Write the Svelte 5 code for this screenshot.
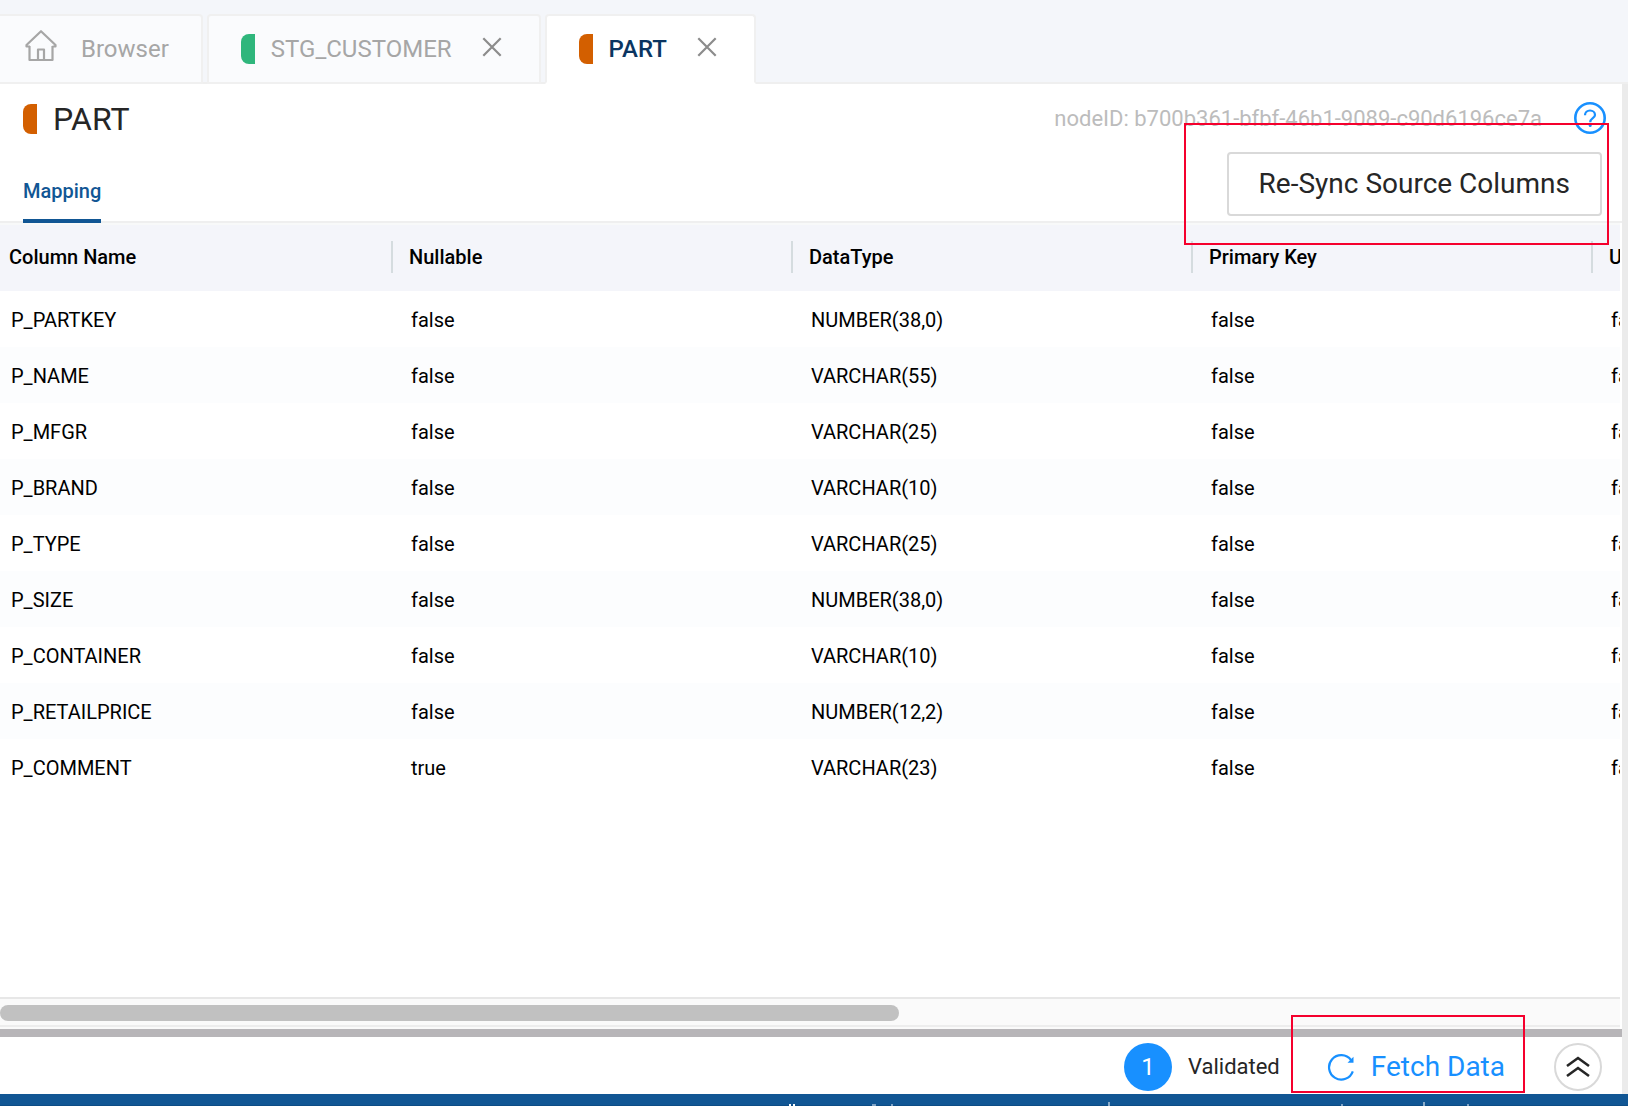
<script>
  const names = ['P_PARTKEY', 'P_NAME', 'P_MFGR', 'P_BRAND', 'P_TYPE', 'P_SIZE', 'P_CONTAINER', 'P_RETAILPRICE', 'P_COMMENT'];
  const types = ['NUMBER(38,0)', 'VARCHAR(55)', 'VARCHAR(25)', 'VARCHAR(10)', 'VARCHAR(25)', 'NUMBER(38,0)', 'VARCHAR(10)', 'NUMBER(12,2)', 'VARCHAR(23)'];
  const headers = ['Column Name', 'Nullable', 'DataType', 'Primary Key', 'Unique'];
  const rows = names.map((name, i) => [name, name === 'P_COMMENT' ? 'true' : 'false', types[i], 'false', 'false']);
</script>

{#snippet closeIcon()}
  <svg width="20" height="20" viewBox="0 0 20 20" aria-hidden="true">
    <path d="M1.300 1.300 18.700 18.700M18.700 1.300 1.300 18.700" fill="none" stroke="currentColor" stroke-width="2.200" />
  </svg>
{/snippet}

<div class="app">
  <nav class="tabs">
    <div class="tab first">
      <button class="label home">
        <svg width="34" height="34" viewBox="0 0 34 34" aria-hidden="true">
          <g fill="none" stroke="currentColor" stroke-width="2.200" stroke-linejoin="round">
            <path d="M6 17.500H2.500V16L17 2.200 31.500 16v1.500H28.500" />
            <path d="M5.500 17v14H28.500V17" />
            <path d="M14 31V20.500h6V31" />
          </g>
        </svg>
        <span>Browser</span>
      </button>
    </div>
    <div class="tab">
      <button class="label"><i class="mark green"></i><span>STG_CUSTOMER</span></button>
      <button class="close" aria-label="Close STG_CUSTOMER">{@render closeIcon()}</button>
    </div>
    <div class="tab active">
      <button class="label"><i class="mark"></i><span>PART</span></button>
      <button class="close" aria-label="Close PART">{@render closeIcon()}</button>
    </div>
  </nav>

  <div class="body">
    <main>
      <header class="title">
        <i class="mark"></i>
        <h1>PART</h1>
        <span class="node">nodeID: b700b361-bfbf-46b1-9089-c90d6196ce7a</span>
        <button class="help" aria-label="Help">
          <svg width="32" height="32" viewBox="0 0 32 32" aria-hidden="true">
            <circle cx="16" cy="16" r="14.700" fill="none" stroke="currentColor" stroke-width="2.600" />
            <path d="M11 13.200c0-2.800 2.200-4.700 5-4.700s5 1.900 5 4.500c0 3.200-4.800 3.300-4.800 7.200" fill="none" stroke="currentColor" stroke-width="2.200" />
            <circle cx="16.200" cy="23.500" r="1.500" fill="currentColor" />
          </svg>
        </button>
      </header>

      <div class="subtabs">
        <button class="mapping">Mapping</button>
        <div class="sync">
          <button>Re-Sync Source Columns</button>
          <div class="outline"></div>
        </div>
      </div>

      <div class="grid">
        <table>
          <thead>
            <tr>{#each headers as h}<th scope="col"><span>{h}</span></th>{/each}</tr>
          </thead>
          <tbody>
            {#each rows as row}
              <tr>{#each row as cell}<td>{cell}</td>{/each}</tr>
            {/each}
          </tbody>
        </table>
      </div>

      <div class="scroll"><div class="thumb"></div></div>

      <div class="actions">
        <span class="badge">1</span>
        <span class="validated">Validated</span>
        <div class="fetchwrap">
          <button class="fetch">
            <svg width="28" height="28" viewBox="0 0 28 28" aria-hidden="true">
              <path d="M25.800 18.300A12.200 12.200 0 1 1 24 7" fill="none" stroke="currentColor" stroke-width="2.200" />
              <path d="M26.500 3.700v6h-6z" fill="currentColor" />
            </svg>
            <span>Fetch Data</span>
          </button>
          <div class="outline"></div>
        </div>
        <button class="expand" aria-label="Expand panel">
          <svg width="24" height="24" viewBox="0 0 24 24" aria-hidden="true">
            <path d="M1 11 12 3l11 8M1 21l11-8 11 8" fill="none" stroke="currentColor" stroke-width="2.600" />
          </svg>
        </button>
      </div>
    </main>
  </div>

  <footer>
    <!-- upper edge of the status line, cut by the window -->
    <svg width="840" height="12" viewBox="0 0 840 12" aria-hidden="true">
      <path d="M1 11h2M5 11h2" stroke="#fff" stroke-width="2" />
      <path d="M84 11h4M103 11h2M553 11h2M679 11h2" stroke="#7fa3c6" stroke-width="2" />
      <path d="M321 8v4M636 8v4" stroke="#8aabc9" stroke-width="2" />
    </svg>
  </footer>
</div>

<style>
  :global(body) { margin: 0; }
  .app {
    height: 100vh;
    display: flex;
    flex-direction: column;
    overflow: hidden;
    font-family: Roboto, "Liberation Sans", sans-serif;
    background: #f4f6fa;
    color: #262626;
  }
  .app * { box-sizing: border-box; }
  button {
    font: inherit;
    color: inherit;
    background: none;
    border: 0;
    padding: 0;
    cursor: pointer;
    white-space: nowrap;
  }
  svg { display: block; flex: none; }
  .tabs {
    display: flex;
    gap: 4px;
    padding-top: 14px;
    border-bottom: 2px solid #efefef;
  }
  .tab {
    display: flex;
    align-items: center;
    height: 70px;
    margin-bottom: -2px;
    padding: 0 37px 0 32px;
    border: 2px solid #f0f0f0;
    border-radius: 4px 4px 0 0;
    background: #fafbfd;
    color: #a6a6a6;
    font-size: 24px;
  }
  .tab.first { padding: 0 32px 0 24px; border-left: 0; border-radius: 0 4px 0 0; }
  .tab.active { background: #fff; border-bottom-color: #fff; color: #0b3561; font-weight: 500; }
  .label { display: flex; align-items: center; gap: 16px; }
  .label.home { gap: 23px; }
  .label.home svg { margin-bottom: 6px; }
  .close { margin: 0 0 4px 30px; color: #8c8c8c; }
  .mark {
    width: 14px;
    height: 30px;
    border-radius: 8px 0 0 8px;
    background: #d35f00;
  }
  .mark.green { background: #2fb67c; }
  .body { flex: 1; min-height: 0; display: flex; background: #ebebeb; padding-right: 6px; }
  main { flex: 1; min-width: 0; display: flex; flex-direction: column; background: #fff; }
  .title { display: flex; align-items: center; height: 68px; padding: 2px 16px 0 23px; }
  h1 { margin: 0 auto 0 16px; font-size: 32px; font-weight: 400; line-height: 40px; }
  .node { padding-bottom: 2px; font-size: 22px; color: #bcbcbc; }
  .help { margin: 0 0 2px 32px; color: #1890ff; }
  .subtabs {
    display: flex;
    align-items: flex-end;
    justify-content: space-between;
    height: 71px;
    padding: 0 20px 0 23px;
    border-bottom: 2px solid #efefef;
  }
  .mapping {
    height: 61px;
    margin-bottom: -2px;
    border-bottom: 4px solid #115694;
    color: #115694;
    font-size: 20px;
    font-weight: 500;
  }
  .sync { position: relative; margin-bottom: 5px; }
  .sync button {
    height: 64px;
    padding: 0 30px;
    border: 2px solid #d9d9d9;
    border-radius: 4px;
    background: #fff;
    font-size: 28px;
    line-height: 32px;
  }
  .outline { position: absolute; border: 2px solid #f5002d; pointer-events: none; }
  .sync .outline { inset: -29px -7px -29px -43px; }
  .grid { flex: 1; min-height: 0; overflow: hidden; margin-right: 2px; padding-top: 2px; background: linear-gradient(#f8f9f9 2px, #fff 2px); }
  table { table-layout: fixed; width: 2000px; border-collapse: collapse; font-size: 20px; color: #000; }
  th { height: 66px; padding: 0 7px 0 9px; background: #f4f5fa; text-align: left; font-weight: 500; }
  th span { display: flex; align-items: center; height: 32px; margin-top: -2px; border-right: 2px solid #d5dcdf; }
  td { height: 56px; padding: 2px 11px 0; }
  tbody tr:nth-child(even) { background: #fcfdfe; }
  .scroll {
    height: 32px;
    padding-top: 6px;
    margin-right: 2px;
    border-top: 2px solid #e7e7e7;
    background: linear-gradient(#fafafa 26px, #ededed 26px, #ededed 28px, #fafafa 28px);
  }
  .thumb { width: 55.5%; height: 16px; border-radius: 8px; background: #c1c1c1; }
  .actions {
    display: flex;
    align-items: center;
    justify-content: flex-end;
    height: 65px;
    padding: 2px 20px 0 0;
    border-top: 8px solid #b7b5b8;
  }
  .badge {
    display: grid;
    place-items: center;
    width: 48px;
    height: 48px;
    border-radius: 50%;
    background: #1890ff;
    color: #fff;
    font-size: 24px;
  }
  .validated { margin-left: 16px; font-size: 22px; }
  .fetchwrap { position: relative; margin: 0 49px 0 47px; }
  .fetch { display: flex; align-items: center; gap: 16px; color: #1890ff; font-size: 28px; }
  .fetchwrap .outline { inset: -35px -20px -10px -36px; }
  .expand {
    display: grid;
    place-items: center;
    width: 48px;
    height: 48px;
    border: 2px solid #d9d9d9;
    border-radius: 50%;
  }
  footer {
    display: flex;
    justify-content: flex-end;
    height: 12px;
    background: #115694;
    box-shadow: inset 0 -1px #0d4c85;
  }
</style>
